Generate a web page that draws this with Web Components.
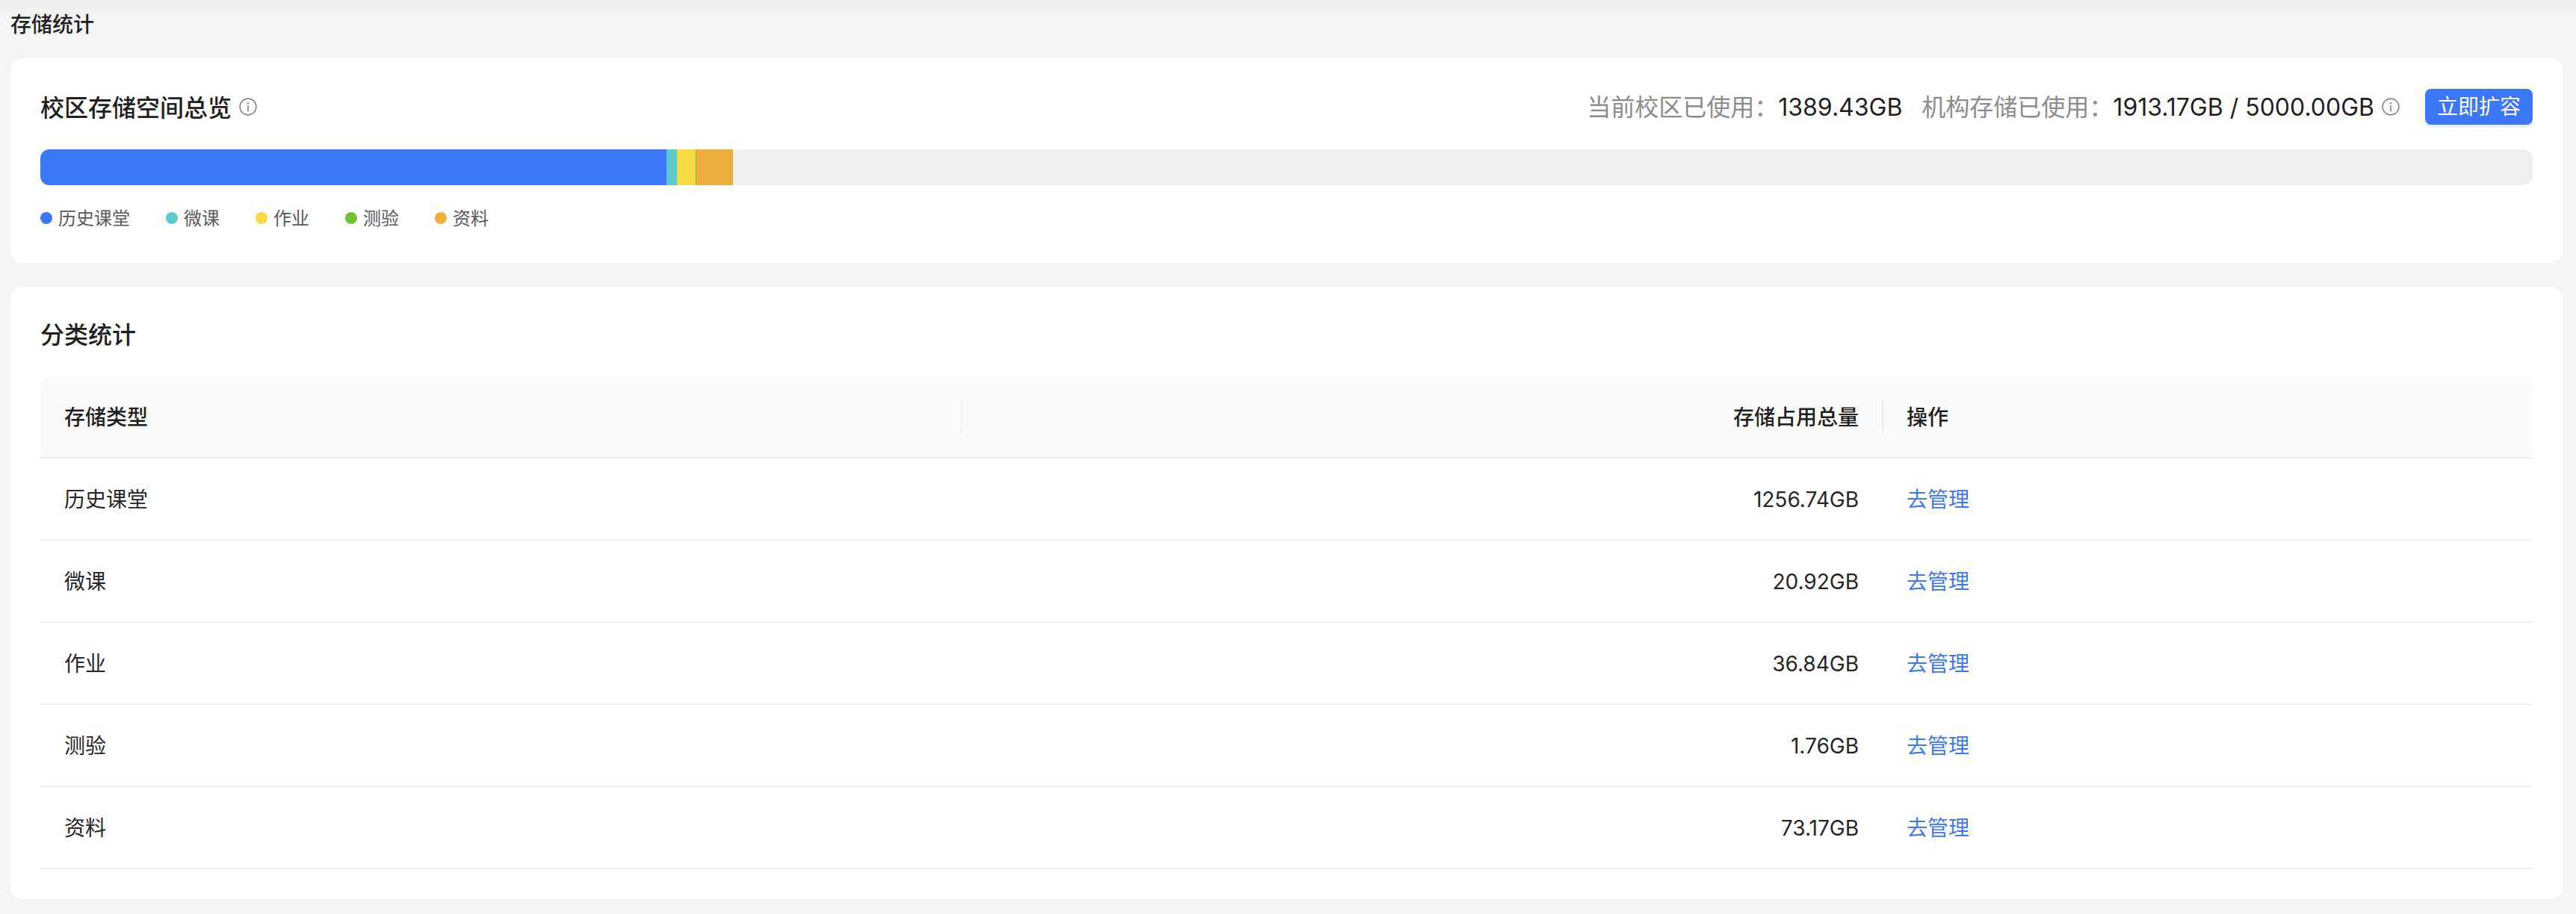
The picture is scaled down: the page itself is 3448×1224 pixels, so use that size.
<!DOCTYPE html>
<html lang="zh-CN">
<head>
<meta charset="utf-8">
<title>存储统计</title>
<style>
html,body{margin:0;padding:0;background:#f5f5f5}
body{font-family:Inter,"Noto Sans CJK SC",sans-serif;color:#1f1f1f;-webkit-font-smoothing:antialiased}
</style>
</head>
<body>
<storage-page>
  <span slot="title">存储统计</span>
  <st-card>
    <overview-head></overview-head>
    <storage-bar></storage-bar>
    <bar-legend>
      <legend-item color="#3c77f8">历史课堂</legend-item>
      <legend-item color="#5fc8cc">微课</legend-item>
      <legend-item color="#f6dc44">作业</legend-item>
      <legend-item color="#76c034">测验</legend-item>
      <legend-item color="#eeae3e">资料</legend-item>
    </bar-legend>
  </st-card>
  <st-card>
    <h-title>分类统计</h-title>
    <stat-table>
      <stat-row head><span>存储类型</span><span>存储占用总量</span><span>操作</span></stat-row>
      <stat-row><span>历史课堂</span><span>1256.74GB</span><a>去管理</a></stat-row>
      <stat-row><span>微课</span><span>20.92GB</span><a>去管理</a></stat-row>
      <stat-row><span>作业</span><span>36.84GB</span><a>去管理</a></stat-row>
      <stat-row><span>测验</span><span>1.76GB</span><a>去管理</a></stat-row>
      <stat-row><span>资料</span><span>73.17GB</span><a>去管理</a></stat-row>
    </stat-table>
  </st-card>
</storage-page>
<script>
function def(name, css, html, init){
  customElements.define(name, class extends HTMLElement{
    constructor(){super();const r=this.attachShadow({mode:'open'});
      r.innerHTML='<style>'+css+'</style>'+html;}
    connectedCallback(){if(init)init(this);}
  });
}
def('storage-page',
 `:host{display:block;height:1224px;box-sizing:border-box;padding:0 18px 0 14px;background:linear-gradient(#ededed 0,#f5f5f5 28px);overflow:hidden}
  .t{height:78px;box-sizing:border-box;padding-top:13px;font-size:28px;line-height:40px;font-weight:500;color:#1f1f1f}
  .c{display:flex;flex-direction:column;gap:32px}`,
 `<div class="t"><slot name="title"></slot></div><div class="c"><slot></slot></div>`);
def('st-card',
 `:host{display:block;background:#fff;border-radius:16px;padding:40px}`,
 `<slot></slot>`);
def('info-icon',
 `:host{display:inline-flex;width:24px;height:24px;flex:none}svg{display:block}`,
 `<svg width="24" height="24" viewBox="0 0 24 24" fill="none"><circle cx="12" cy="12" r="10.9" stroke="#8a8a8a" stroke-width="1.6"/><circle cx="12" cy="7.2" r="1.2" fill="#8a8a8a"/><rect x="11.1" y="10.2" width="1.8" height="8" fill="#8a8a8a"/></svg>`);
def('h-title',
 `:host{display:block;box-sizing:border-box;height:48px;padding-top:1px;font-size:32px;line-height:48px;font-weight:500;color:#1f1f1f;margin:0 0 32px}`,
 `<slot></slot>`);
def('overview-head',
 `:host{display:flex;align-items:center;height:48px;margin-top:1px}
  .title{font-size:32px;line-height:48px;font-weight:500;color:#1f1f1f;margin:3px 10px 0 0}
  .sp{flex:1}
  .l{font-size:32px;line-height:48px;color:#8c8c8c;margin-top:2px}
  .v{font-size:32px;line-height:48px;color:#1f1f1f;font-weight:400;margin-top:2px}
  .g{width:26px}
  info-icon.ti{margin-top:-1px}
  info-icon.m{margin:0 34px 0 10px}
  button{all:unset;box-sizing:border-box;width:144px;height:48px;border-radius:8px;background:#3c77f8;color:#fff;font-size:28px;line-height:48px;text-align:center;box-shadow:0 4px 0 #e8f3ff}`,
 `<span class="title">校区存储空间总览</span><info-icon class="ti"></info-icon><span class="sp"></span>
  <span class="l">当前校区已使用：</span><span class="v">1389.43GB</span><span class="g"></span>
  <span class="l">机构存储已使用：</span><span class="v">1913.17GB / 5000.00GB</span><info-icon class="m"></info-icon><button>立即扩容</button>`);
def('storage-bar',
 `:host{display:flex;height:48px;margin-top:33px;background:#efefef;border-radius:12px;overflow:hidden}
  i{display:block;height:100%;flex:none}`,
 `<i style="width:838px;background:#3c77f8"></i><i style="width:14px;background:#5fc8cc"></i><i style="width:25px;background:#f6dc44"></i><i style="width:1px;background:#76c034"></i><i style="width:49px;background:#eeae3e"></i>`);
def('bar-legend',
 `:host{display:flex;gap:48px;margin-top:24px;height:40px}`,
 `<slot></slot>`);
def('legend-item',
 `:host{display:flex;align-items:center;gap:8px;font-size:24px;line-height:40px;color:#595959}
  i{width:16px;height:16px;border-radius:50%;display:block;flex:none}
  span{position:relative;top:1px}`,
 `<i></i><span><slot></slot></span>`,
 el=>{el.shadowRoot.querySelector('i').style.background=el.getAttribute('color');});
def('stat-table',
 `:host{display:block;border-radius:16px 16px 0 0;overflow:hidden}`,
 `<slot></slot>`);
def('stat-row',
 `:host{display:grid;grid-template-columns:1233px 1233px 1fr;height:110px;box-sizing:border-box;border-bottom:2px solid #f0f0f0;font-size:28px;line-height:40px;color:#262626;align-items:center;position:relative}
  :host([head]){background:#fafafa;font-weight:500;color:#1f1f1f}
  ::slotted(*){padding:2px 32px 0;display:block}
  ::slotted(:nth-child(2)){text-align:right}
  ::slotted(a){color:#3c77f8;cursor:pointer}
  .s{position:absolute;top:31px;width:2px;height:46px;background:#f0f0f0;display:none}
  :host([head]) .s{display:block}`,
 `<slot></slot><i class="s" style="left:1232px"></i><i class="s" style="left:2465px"></i>`);
</script>
</body>
</html>
